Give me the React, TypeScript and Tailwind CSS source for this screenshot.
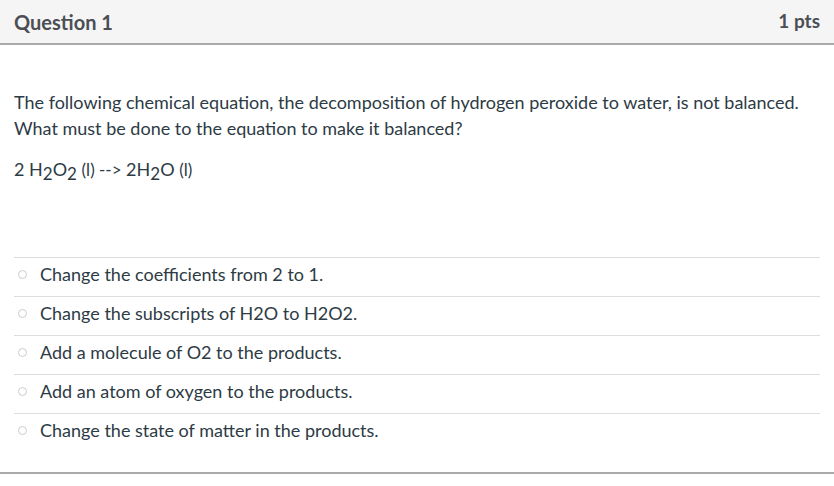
const options = [
  'Change the coefficients from 2 to 1.',
  'Change the subscripts of H2O to H2O2.',
  'Add a molecule of O2 to the products.',
  'Add an atom of oxygen to the products.',
  'Change the state of matter in the products.',
]

function Sub({ children }: { children: React.ReactNode }) {
  return <span className="relative top-[4px] text-[17px]">{children}</span>
}

export default function App() {
  return (
    <div className="w-[834px] h-[486px] bg-white font-['Lato',sans-serif] text-[#2d3b45]">
      <div className="h-[45px] bg-[#f5f5f5] border-b-2 border-[#aaaaaa] px-[14px] flex items-center justify-between">
        <span className="text-[20px] font-bold text-[#4b4f54]">Question 1</span>
        <span className="text-[19px] font-bold text-[#4b4f54]">1 pts</span>
      </div>

      <div className="pt-[44px] px-[14px] text-[18px] leading-[26px]">
        <p>
          The following chemical equation, the decomposition of hydrogen peroxide to water, is not balanced.
          <br />
          What must be done to the equation to make it balanced?
        </p>
        <p className="mt-[15px]">
          2 H<Sub>2</Sub>O<Sub>2</Sub> <span className="text-[17px]">(l) --&gt;</span> 2H<Sub>2</Sub>O{' '}
          <span className="text-[17px]">(l)</span>
        </p>
      </div>

      <div className="mt-[74px] mx-[14px]">
        {options.map((o) => (
          <div key={o} className="h-[39px] border-t border-[#dddddd] flex items-center gap-[13px] pb-[5px]">
            <span className="ml-[4px] w-[9px] h-[9px] rounded-full border border-[#cccccc]" />
            <span className="text-[18px]">{o}</span>
          </div>
        ))}
      </div>

      <div className="mt-[20px] border-t-2 border-[#aaaaaa]" />
    </div>
  )
}
